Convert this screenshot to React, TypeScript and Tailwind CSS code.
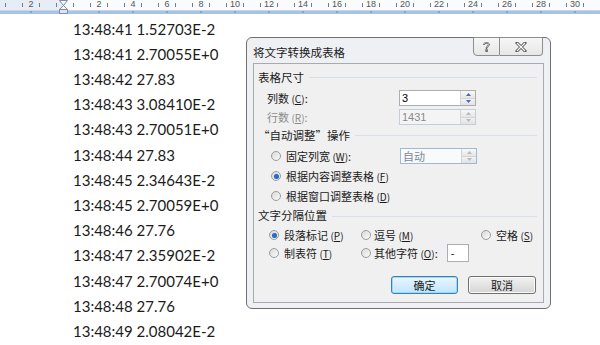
const lines = [
  "13:48:41 1.52703E-2",
  "13:48:41 2.70055E+0",
  "13:48:42 27.83",
  "13:48:43 3.08410E-2",
  "13:48:43 2.70051E+0",
  "13:48:44 27.83",
  "13:48:45 2.34643E-2",
  "13:48:45 2.70059E+0",
  "13:48:46 27.76",
  "13:48:47 2.35902E-2",
  "13:48:47 2.70074E+0",
  "13:48:48 27.76",
  "13:48:49 2.08042E-2",
];

const cjk = "font-['Noto_Sans_CJK_SC','Microsoft_YaHei',sans-serif]";

function Ruler() {
  const ticks: number[] = [];
  for (let k = -4; k < 32; k++) ticks.push(65 + 17 * (k + 0.5));
  const nums: { x: number; n: number }[] = [{ x: 31, n: 2 }];
  for (let n = 2; n <= 30; n += 2) nums.push({ x: 65 + 17 * n, n });
  return (
    <div className="relative h-[14px] w-full overflow-hidden">
      <div className="flex h-[10px] w-full">
        <div className="h-full w-[64px] bg-[#e6edf6]" />
        <div className="h-full flex-1 bg-[#f9fbfd]" />
      </div>
      <div className="h-[4px] w-full border-t border-[#c5d6ec] bg-[#a9c3e6]" />
      <svg className="absolute left-0 top-0" width="600" height="14">
        {ticks.map((x) => (
          <line key={x} x1={x} x2={x} y1="3" y2="7" stroke="#7b7b7b" strokeWidth="1" />
        ))}
        {nums.map(({ x }) => (
          <line key={"b" + x} x1={x} x2={x} y1="11" y2="13" stroke="#6f86a6" strokeWidth="1" />
        ))}
        <path d="M59.5 0.5 L67.5 0.5 L63.5 5.5 Z" fill="#f4f6f9" stroke="#7f8ea3" />
        <path d="M63.5 5.5 L67.5 9.5 L59.5 9.5 Z" fill="#f4f6f9" stroke="#7f8ea3" />
        <rect x="59.5" y="9.5" width="8" height="4" fill="#dfe5ee" stroke="#7f8ea3" />
      </svg>
      {nums.map(({ x, n }) => (
        <span
          key={n + "-" + x}
          className="absolute top-[-1px] -translate-x-1/2 font-['Liberation_Sans',sans-serif] text-[9px] leading-[11px] text-[#555]"
          style={{ left: x }}
        >
          {n}
        </span>
      ))}
    </div>
  );
}

function Spin({ disabled }: { disabled?: boolean }) {
  const c = disabled ? "#b9b9b9" : "#3f6db5";
  return (
    <div className="flex w-[15px] flex-col border-l border-[#d4d4d4]">
      <div className="flex flex-1 items-center justify-center border-b border-[#d4d4d4] bg-linear-to-b from-[#f8f8f8] to-[#e6e6e6]">
        <svg width="5" height="3">
          <path d="M0 3 L2.5 0 L5 3Z" fill={c} />
        </svg>
      </div>
      <div className="flex flex-1 items-center justify-center bg-linear-to-b from-[#f2f2f2] to-[#e2e2e2]">
        <svg width="5" height="3">
          <path d="M0 0 L2.5 3 L5 0Z" fill={c} />
        </svg>
      </div>
    </div>
  );
}

function NumBox({ value, disabled, blue }: { value: string; disabled?: boolean; blue?: boolean }) {
  let text = "text-black font-['Liberation_Sans',sans-serif]";
  if (disabled) text = "text-[#8a8a8a] font-['Liberation_Sans',sans-serif]";
  if (blue) text = "text-[#7a889c] " + cjk;
  return (
    <div
      className={
        "flex h-[16px] w-[77px] border " +
        (blue ? "border-[#9db9dc] bg-[#fafafa]" : disabled ? "border-[#c4cedb] bg-[#f4f4f4]" : "border-[#abadb3] bg-white")
      }
    >
      <div className={"flex flex-1 items-center pl-[2px] text-[11px] " + text}>{value}</div>
      <Spin disabled={disabled || blue} />
    </div>
  );
}

function Radio({ checked }: { checked?: boolean }) {
  return (
    <div className="flex h-[10px] w-[10px] shrink-0 items-center justify-center rounded-full border border-[#9a9c9e] bg-linear-to-br from-[#d9d9d9] to-[#fbfbfb]">
      {checked && <div className="h-[5px] w-[5px] rounded-full bg-[#2a6bc4] shadow-[0_0_1px_#7fb0ee]" />}
    </div>
  );
}

function Acc({ k }: { k: string }) {
  return (
    <span className="text-[10px]">
      (<span className="underline">{k}</span>)
    </span>
  );
}

function Header({ text }: { text: string }) {
  return (
    <div className="flex items-center gap-[5px] pr-[6px]">
      <span className="text-[11.5px] text-[#1a1a1a]">{text}</span>
      <div className="h-px flex-1 bg-[#d7dfe8]" />
    </div>
  );
}

function Dialog() {
  return (
    <div className={"absolute left-[246px] top-[37px] h-[272px] w-[305px] rounded-[6px] border border-[#707070] bg-[#eef0f3] px-[6px] " + cjk}>
      <div className="absolute right-[7px] top-[-1px] flex h-[19px]">
        <div className="flex w-[27px] items-center justify-center rounded-bl-[4px] border border-[#8e8e8e] bg-linear-to-b from-[#f6f6f6] to-[#e7e7e7]">
          <svg width="9" height="12" viewBox="0 0 9 12">
            <path
              d="M1.5 3.5 C1.5 1 7.5 1 7.5 3.5 C7.5 5.5 5 5.5 5 7.5 L4 7.5 C4 5 6.3 5 6.3 3.5 C6.3 2 2.7 2 2.7 3.5 Z"
              fill="#fff"
              stroke="#5a5a5a"
              strokeWidth="0.9"
            />
            <rect x="3.8" y="8.8" width="1.6" height="1.6" fill="#fff" stroke="#5a5a5a" strokeWidth="0.9" />
          </svg>
        </div>
        <div className="flex w-[43px] items-center justify-center rounded-br-[4px] border border-l-0 border-[#8e8e8e] bg-linear-to-b from-[#f6f6f6] to-[#e7e7e7]">
          <svg width="12" height="10" viewBox="0 0 12 10">
            <path d="M2 1 L10 9 M10 1 L2 9" stroke="#5a5a5a" strokeWidth="3" strokeLinecap="square" />
            <path d="M2 1 L10 9 M10 1 L2 9" stroke="#fff" strokeWidth="1.1" />
          </svg>
        </div>
      </div>
      <div className="flex h-[25px] items-center pt-[4px] text-[11.5px] text-[#1a1a1a]">将文字转换成表格</div>
      <div className="flex h-[240px] flex-col border border-[#a7abb0] bg-[#f0f0f0] pl-[4px] pt-[1px]">
        <div className="h-[25px] pt-[4px]">
          <Header text="表格尺寸" />
        </div>
        <div className="flex h-[16px] items-center justify-between pl-[9px] pr-[67px] text-[11px] text-[#1a1a1a]">
          <span>
            列数 <Acc k="C" />:
          </span>
          <NumBox value="3" />
        </div>
        <div className="mt-[3px] flex h-[16px] items-center justify-between pl-[9px] pr-[67px] text-[11px] text-[#8c8c8c]">
          <span>
            行数 <Acc k="R" />:
          </span>
          <NumBox value="1431" disabled />
        </div>
        <div className="flex h-[21px] items-center">
          <div className="w-full">
            <Header text="“自动调整”操作" />
          </div>
        </div>
        <div className="flex h-[20px] items-center pl-[13px] pr-[66px] text-[11px] text-[#1a1a1a]">
          <Radio />
          <span className="ml-[5px] flex-1">
            固定列宽 <Acc k="W" />:
          </span>
          <NumBox value="自动" blue />
        </div>
        <div className="flex h-[20px] items-center pl-[13px] text-[11px] text-[#1a1a1a]">
          <Radio checked />
          <span className="ml-[5px]">
            根据内容调整表格 <Acc k="F" />
          </span>
        </div>
        <div className="flex h-[20px] items-center pl-[13px] text-[11px] text-[#1a1a1a]">
          <Radio />
          <span className="ml-[5px]">
            根据窗口调整表格 <Acc k="D" />
          </span>
        </div>
        <div className="flex h-[20px] items-center">
          <div className="w-full">
            <Header text="文字分隔位置" />
          </div>
        </div>
        <div className="grid h-[18px] grid-cols-[92px_1fr_62px] items-center pl-[11px] text-[11px] text-[#1a1a1a]">
          <div className="flex items-center">
            <Radio checked />
            <span className="ml-[5px]">
              段落标记 <Acc k="P" />
            </span>
          </div>
          <div className="flex items-center">
            <Radio />
            <span className="ml-[3px]">
              逗号 <Acc k="M" />
            </span>
          </div>
          <div className="flex items-center">
            <Radio />
            <span className="ml-[5px]">
              空格 <Acc k="S" />
            </span>
          </div>
        </div>
        <div className="grid h-[18px] grid-cols-[92px_1fr] items-center pl-[11px] text-[11px] text-[#1a1a1a]">
          <div className="flex items-center">
            <Radio />
            <span className="ml-[5px]">
              制表符 <Acc k="T" />
            </span>
          </div>
          <div className="flex items-center">
            <Radio />
            <span className="ml-[3px]">
              其他字符 <Acc k="O" />:
            </span>
            <div className="ml-[9px] flex h-[18px] w-[22px] items-center border border-[#abadb3] bg-white pl-[3px] font-['Liberation_Sans',sans-serif] text-[11px]">
              -
            </div>
          </div>
        </div>
        <div className="mt-[14px] flex justify-end gap-[10px] pr-[7px] text-[11px] text-[#1a1a1a]">
          <button className="flex h-[18px] w-[67px] items-center justify-center rounded-[3px] border border-[#3c7fb1] bg-linear-to-b from-[#eaf6fd] to-[#bee6fd] shadow-[inset_0_0_0_1px_#9fd8f6]">
            确定
          </button>
          <button className="flex h-[18px] w-[68px] items-center justify-center rounded-[3px] border border-[#707070] bg-linear-to-b from-[#f2f2f2] to-[#d5d5d5] shadow-[inset_0_0_0_1px_#fbfbfb]">
            取消
          </button>
        </div>
      </div>
    </div>
  );
}

export default function App() {
  return (
    <div className="relative h-[345px] w-[600px] overflow-hidden bg-white">
      <Ruler />
      <div className="pl-[73px] pt-[2.5px] font-['Lato',sans-serif] text-[15px] leading-[25.2px] text-[#1b1b1b]">
        {lines.map((l, i) => (
          <div key={i}>{l}</div>
        ))}
      </div>
      <Dialog />
    </div>
  );
}
